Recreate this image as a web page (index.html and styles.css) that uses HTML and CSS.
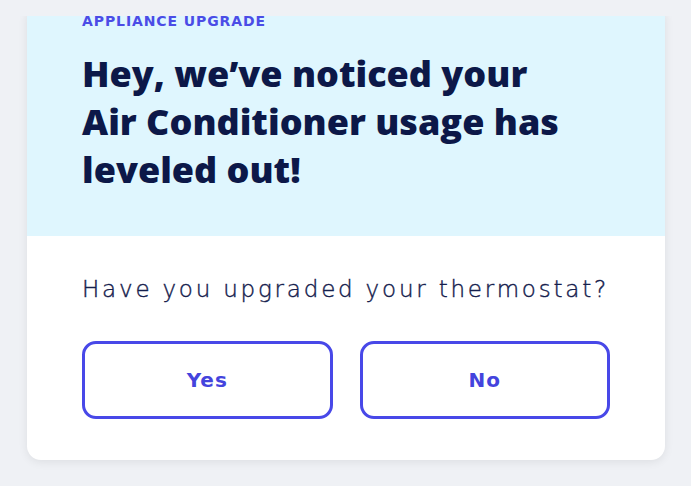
FILE: index.html
```html
<!DOCTYPE html>
<html>
<head>
	<title>Appliance upgrade</title>
	<link rel="stylesheet" href="styles.css">
</head>
<body>
   <div class="feed">
      <div class="card">
         <div class="card-top">
            <div class="label">APPLIANCE UPGRADE</div>
            <h2 class="title">Hey, we’ve noticed your<br>Air Conditioner usage has<br>leveled out!</h2>
         </div>
         <div class="card-body">
            <p class="question">Have you upgraded your thermostat?</p>
            <div class="answers">
               <button class="answer">Yes</button>
               <button class="answer">No</button>
            </div>
         </div>
      </div>
   </div>
</body>
</html>
```

FILE: styles.css
```css
body{
	margin: 0;
	background: #eff1f5;
	font-family: "Open Sans", Lato, sans-serif;
}
.feed{
	margin-top: 16px;
	height: 470px;
	overflow: hidden;
	padding: 0 26px 0 27px;
}
.card{
	margin-top: -5px;
	background: #fff;
	border-radius: 0 0 14px 14px;
	overflow: hidden;
	box-shadow: 0 2px 10px rgba(0,0,0,0.08);
}
.card-top{
	background: #dff6fe;
	padding: 0 55px 42px;
}
.label{
	color: #4b4ce6;
	font-family: "DejaVu Sans", sans-serif;
	font-size: 14px;
	line-height: 20px;
	font-weight: 700;
	letter-spacing: 0.9px;
}
.title{
	margin: 19px 0 0;
	color: #0c1848;
	font-size: 36px;
	line-height: 48px;
	font-weight: 800;
}
.card-body{
	padding: 39px 55px 41px;
}
.question{
	margin: 0;
	color: #15204d;
	font-family: "DejaVu Sans", sans-serif;
	font-size: 23px;
	line-height: 28px;
	font-weight: 200;
	letter-spacing: 2.8px;
	white-space: nowrap;
	-webkit-text-stroke: 0.4px #15204d;
}
.answers{
	margin-top: 38px;
	display: flex;
	gap: 27px;
}
.answer{
	flex: 1;
	height: 78px;
	background: #fff;
	border: 3px solid #4848e8;
	border-radius: 14px;
	color: #4444dd;
	font-family: "DejaVu Sans", sans-serif;
	font-size: 20px;
	font-weight: 700;
	letter-spacing: 1px;
}
```
